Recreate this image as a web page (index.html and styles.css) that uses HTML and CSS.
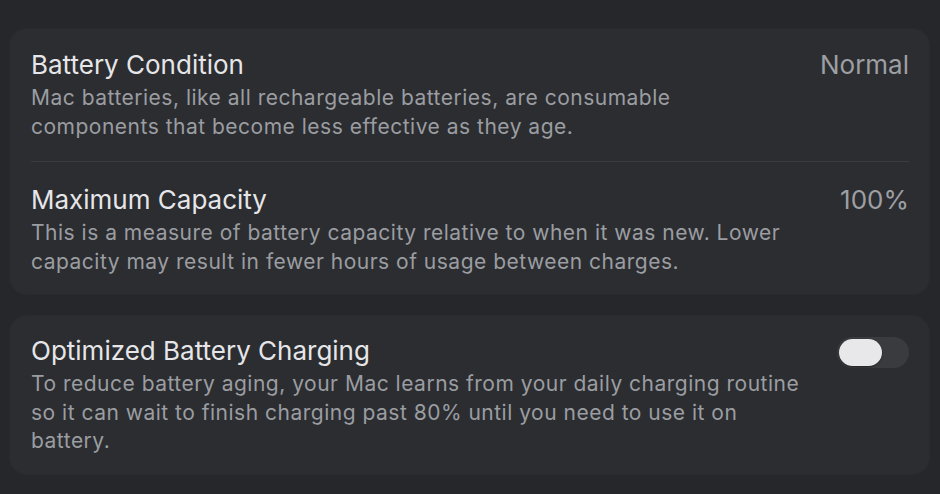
FILE: index.html
```html
<!DOCTYPE html>
<html>
<head>
<meta charset="utf-8">
<link rel="stylesheet" href="styles.css">
</head>
<body>
<main class="page">
  <section class="card">
    <div class="row">
      <div class="text">
        <div class="title">Battery Condition</div>
        <div class="desc">Mac batteries, like all rechargeable batteries, are consumable components that become less effective as they age.</div>
      </div>
      <div class="value">Normal</div>
    </div>
    <div class="divider"></div>
    <div class="row">
      <div class="text">
        <div class="title">Maximum Capacity</div>
        <div class="desc">This is a measure of battery capacity relative to when it was new. Lower capacity may result in fewer hours of usage between charges.</div>
      </div>
      <div class="value">100%</div>
    </div>
  </section>
  <section class="card">
    <div class="row">
      <div class="text">
        <div class="title">Optimized Battery Charging</div>
        <div class="desc">To reduce battery aging, your Mac learns from your daily charging routine so it can wait to finish charging past 80% until you need to use it on battery.</div>
      </div>
      <div class="toggle"><span class="knob"></span></div>
    </div>
  </section>
</main>
</body>
</html>
```
FILE: styles.css
```css
html, body {
  margin: 0;
  padding: 0;
  background: #25272b;
  width: 940px;
  height: 494px;
  overflow: hidden;
}
.page {
  font-family: Inter, "Noto Sans", sans-serif;
  padding: 29px 11px 0 10px;
  display: flex;
  flex-direction: column;
  gap: 22px;
}
.card {
  background: #2b2d31;
  border-radius: 16px;
  padding: 0 20px 0 21px;
  box-shadow: 0 0 0 1px rgba(255,255,255,0.015);
}
.row {
  display: flex;
  justify-content: space-between;
  align-items: flex-start;
  gap: 35px;
  padding: 21px 0 20px;
}
.row + .divider + .row { padding: 23px 0 18px; }
.card:last-child .row { padding: 20px 0 18px; }
.text { flex: 1; min-width: 0; }
.title {
  color: #e6e6e8;
  font-size: 26px;
  line-height: 30px;
  margin-bottom: 4px;
}
.desc {
  color: #9b9da1;
  font-size: 21px;
  line-height: 28.5px;
  letter-spacing: 0.5px;
}
.value {
  color: #9d9fa3;
  font-size: 26px;
  line-height: 30px;
  white-space: nowrap;
}
.divider {
  height: 1px;
  background: #3a3c40;
}
.toggle {
  width: 72px;
  height: 31px;
  border-radius: 16px;
  background: #3a3b3f;
  margin-top: 1px;
  padding: 2px;
  box-sizing: border-box;
  flex: none;
}
.knob {
  display: block;
  width: 43px;
  height: 27px;
  border-radius: 14px;
  background: #e8e8ea;
  box-shadow: 0 1px 2px rgba(0,0,0,0.4);
}
```
